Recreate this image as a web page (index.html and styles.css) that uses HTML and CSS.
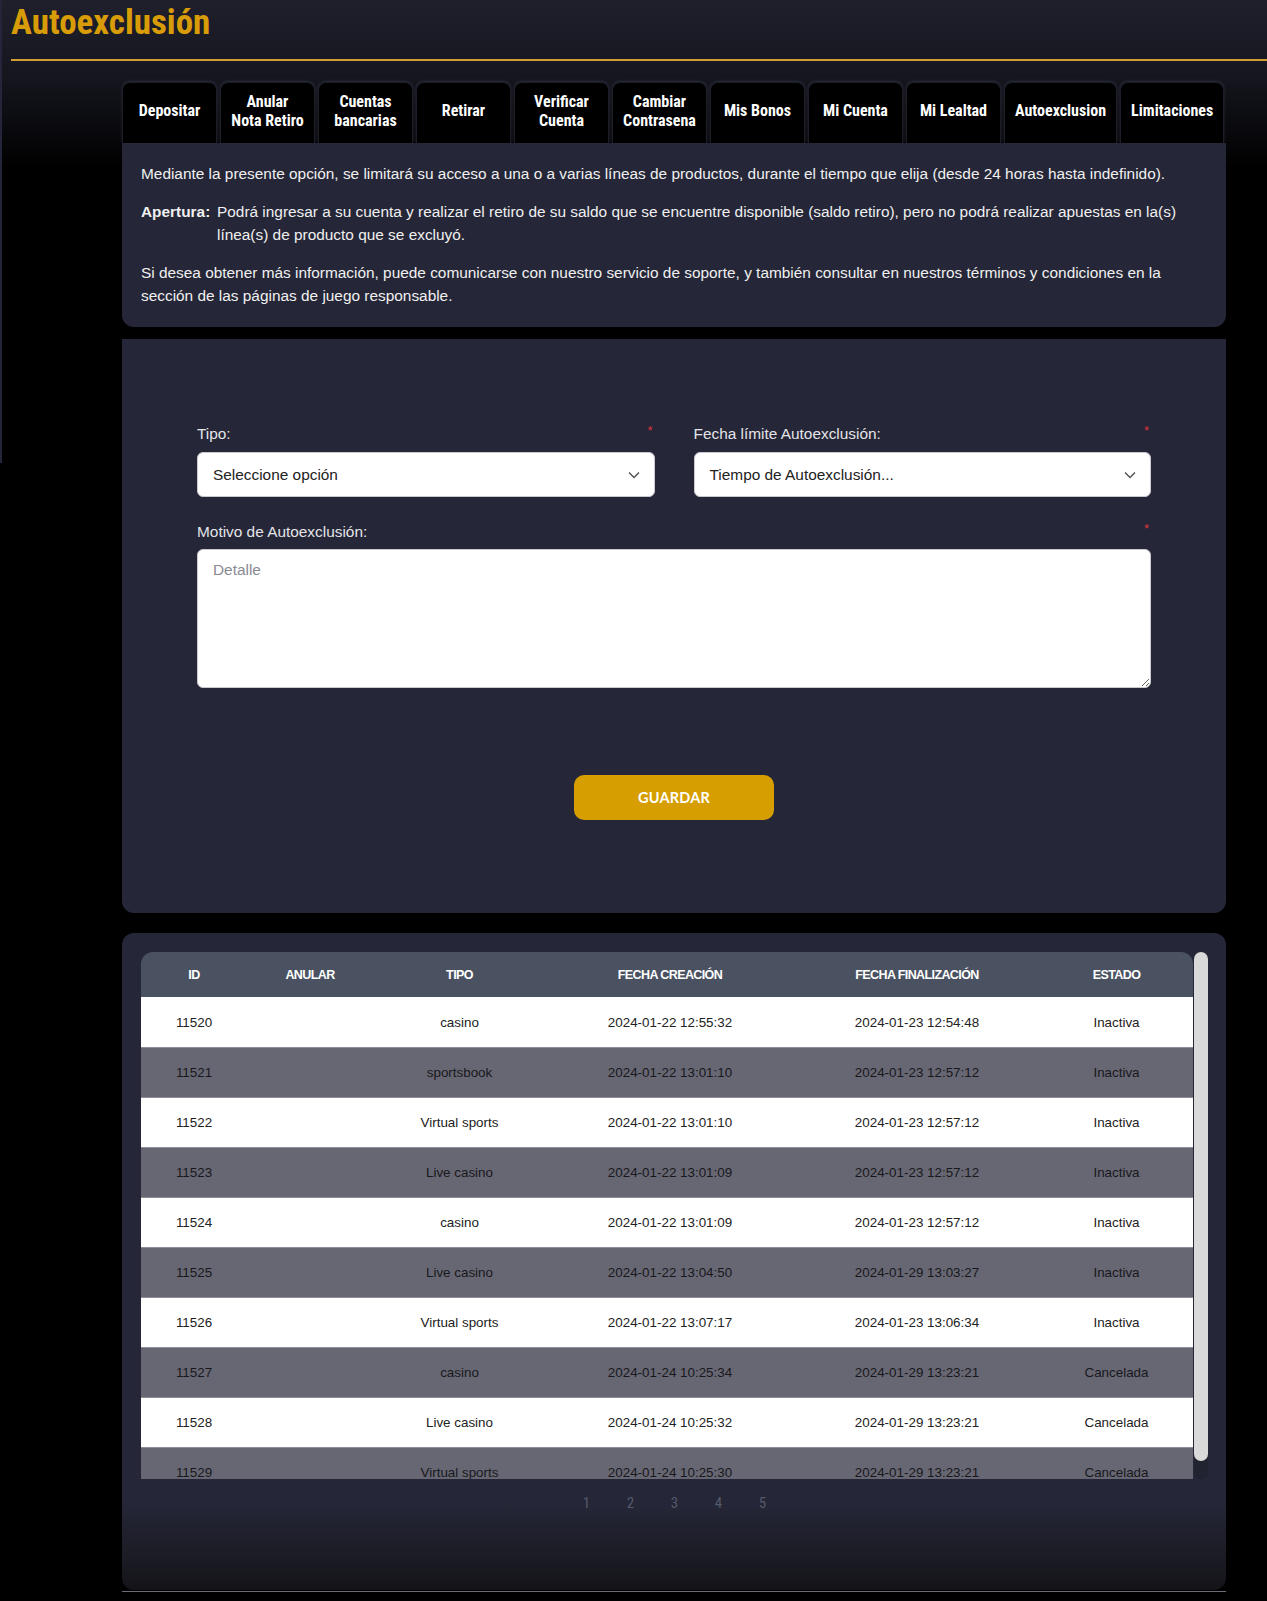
FILE: index.html
```html
<!DOCTYPE html>
<html lang="es">
<head>
<meta charset="utf-8">
<title>Autoexclusión</title>
<link rel="stylesheet" href="styles.css">
</head>
<body>
<div class="page">
  <header class="page-head">
    <h1 class="title">Autoexclusión</h1>
  </header>

  <main class="content">
    <nav class="tabs">
      <a class="tab">Depositar</a>
      <a class="tab">Anular<br>Nota Retiro</a>
      <a class="tab">Cuentas<br>bancarias</a>
      <a class="tab">Retirar</a>
      <a class="tab">Verificar<br>Cuenta</a>
      <a class="tab">Cambiar<br>Contrasena</a>
      <a class="tab">Mis Bonos</a>
      <a class="tab">Mi Cuenta</a>
      <a class="tab">Mi Lealtad</a>
      <a class="tab">Autoexclusion</a>
      <a class="tab">Limitaciones</a>
    </nav>

    <section class="panel info">
      <p>Mediante la presente opción, se limitará su acceso a una o a varias líneas de productos, durante el tiempo que elija (desde 24 horas hasta indefinido).</p>
      <p class="def"><b class="def-label">Apertura:</b><span>Podrá ingresar a su cuenta y realizar el retiro de su saldo que se encuentre disponible (saldo retiro), pero no podrá realizar apuestas en la(s) línea(s) de producto que se excluyó.</span></p>
      <p>Si desea obtener más información, puede comunicarse con nuestro servicio de soporte, y también consultar en nuestros términos y condiciones en la sección de las páginas de juego responsable.</p>
    </section>

    <section class="panel form-panel">
      <form class="form">
        <div class="form-row">
          <div class="field">
            <div class="label-row"><label>Tipo:</label><span class="req">*</span></div>
            <div class="select"><span>Seleccione opción</span>
              <svg class="chev" width="12" height="8" viewBox="0 0 12 8"><path d="M1 1.5 6 6.5 11 1.5" fill="none" stroke="#555" stroke-width="1.5"/></svg>
            </div>
          </div>
          <div class="field">
            <div class="label-row"><label>Fecha límite Autoexclusión:</label><span class="req">*</span></div>
            <div class="select"><span>Tiempo de Autoexclusión...</span>
              <svg class="chev" width="12" height="8" viewBox="0 0 12 8"><path d="M1 1.5 6 6.5 11 1.5" fill="none" stroke="#555" stroke-width="1.5"/></svg>
            </div>
          </div>
        </div>
        <div class="field full">
          <div class="label-row"><label>Motivo de Autoexclusión:</label><span class="req">*</span></div>
          <textarea class="textarea" placeholder="Detalle"></textarea>
        </div>
        <div class="actions">
          <button type="button" class="btn">GUARDAR</button>
        </div>
      </form>
    </section>

    <section class="panel table-panel">
      <div class="table-wrap">
        <div class="viewport">
          <table class="grid">
            <colgroup>
              <col class="c-id"><col class="c-anular"><col class="c-tipo"><col class="c-fc"><col class="c-ff"><col class="c-estado">
            </colgroup>
            <thead>
              <tr><th>ID</th><th>ANULAR</th><th>TIPO</th><th>FECHA CREACIÓN</th><th>FECHA FINALIZACIÓN</th><th>ESTADO</th></tr>
            </thead>
            <tbody>
              <tr><td>11520</td><td></td><td>casino</td><td>2024-01-22 12:55:32</td><td>2024-01-23 12:54:48</td><td>Inactiva</td></tr>
              <tr><td>11521</td><td></td><td>sportsbook</td><td>2024-01-22 13:01:10</td><td>2024-01-23 12:57:12</td><td>Inactiva</td></tr>
              <tr><td>11522</td><td></td><td>Virtual sports</td><td>2024-01-22 13:01:10</td><td>2024-01-23 12:57:12</td><td>Inactiva</td></tr>
              <tr><td>11523</td><td></td><td>Live casino</td><td>2024-01-22 13:01:09</td><td>2024-01-23 12:57:12</td><td>Inactiva</td></tr>
              <tr><td>11524</td><td></td><td>casino</td><td>2024-01-22 13:01:09</td><td>2024-01-23 12:57:12</td><td>Inactiva</td></tr>
              <tr><td>11525</td><td></td><td>Live casino</td><td>2024-01-22 13:04:50</td><td>2024-01-29 13:03:27</td><td>Inactiva</td></tr>
              <tr><td>11526</td><td></td><td>Virtual sports</td><td>2024-01-22 13:07:17</td><td>2024-01-23 13:06:34</td><td>Inactiva</td></tr>
              <tr><td>11527</td><td></td><td>casino</td><td>2024-01-24 10:25:34</td><td>2024-01-29 13:23:21</td><td>Cancelada</td></tr>
              <tr><td>11528</td><td></td><td>Live casino</td><td>2024-01-24 10:25:32</td><td>2024-01-29 13:23:21</td><td>Cancelada</td></tr>
              <tr><td>11529</td><td></td><td>Virtual sports</td><td>2024-01-24 10:25:30</td><td>2024-01-29 13:23:21</td><td>Cancelada</td></tr>
            </tbody>
          </table>
        </div>
        <div class="scrollbar"><div class="thumb"></div></div>
      </div>
      <div class="pager">
        <span>1</span><span>2</span><span>3</span><span>4</span><span>5</span>
      </div>
    </section>
    <div class="bottom-rule"></div>
  </main>
</div>
</body>
</html>
```
FILE: styles.css
```css
* { box-sizing: border-box; }

html, body {
  margin: 0;
  padding: 0;
}

body {
  background: #000 linear-gradient(180deg, #1f202c 0px, #14151d 80px, #000 170px) no-repeat;
  background-size: 100% 200px;
  font-family: "Liberation Sans", Arial, sans-serif;
  color: #eee;
  min-height: 1601px;
}

.page {
  position: relative;
  padding-bottom: 40px;
}

.page::before {
  content: "";
  position: absolute;
  left: 0;
  top: 0;
  width: 2px;
  height: 463px;
  background: #24253a;
}

/* header */
.page-head {
  margin-left: 11px;
  border-bottom: 2px solid #d29d33;
  height: 61px;
}

.title {
  margin: 0;
  font-family: "Roboto Condensed", "Liberation Sans", sans-serif;
  font-weight: 700;
  font-size: 35px;
  line-height: 45px;
  color: #d89c08;
}

/* content column */
.content {
  margin-left: 122px;
  width: 1104px;
  padding-top: 21px;
}

.tabs {
  display: flex;
  gap: 3px;
  height: 61px;
}

.tab {
  flex: 0 0 auto;
  min-width: 95px;
  padding: 0 10px 3px;
  display: flex;
  align-items: center;
  justify-content: center;
  text-align: center;
  background: #000;
  border: 1px solid #1c1d27;
  border-bottom: 0;
  border-radius: 8px 8px 0 0;
  box-shadow: 0 -1px 3px rgba(90, 92, 120, 0.35);
  color: #fff;
  font-family: "Roboto Condensed", "Liberation Sans", sans-serif;
  font-weight: 700;
  font-size: 16px;
  line-height: 18.5px;
}

.panel {
  background: #252637;
}

.info {
  border-radius: 0 0 12px 12px;
  padding: 19px 30px 20px 19px;
  font-size: 15.4px;
  line-height: 23px;
  color: #f0f0f0;
}

.info p {
  margin: 0 0 15px;
}

.info p:last-child {
  margin-bottom: 0;
}

.def {
  display: flex;
}

.def-label {
  flex: 0 0 76px;
}

/* form */
.form-panel {
  margin-top: 12px;
  border-radius: 0 0 12px 12px;
  padding: 85px 75px 0;
  height: 574px;
}

.form {
  width: 954px;
}

.form-row {
  display: flex;
  gap: 39px;
}

.field {
  flex: 1 1 0;
}

.field.full {
  margin-top: 25px;
}

.label-row {
  display: flex;
  justify-content: space-between;
  align-items: flex-start;
  height: 20px;
  line-height: 20px;
  font-size: 15.4px;
  color: #e4e4e8;
}

.req {
  color: #d9333f;
  font-size: 13px;
  line-height: 14px;
  margin-right: 2px;
}

.field .label-row {
  margin-bottom: 8px;
}

.field.full .label-row {
  margin-bottom: 7px;
}

.select {
  height: 45px;
  background: #fff;
  border: 1px solid #c9c9cf;
  border-radius: 6px;
  padding: 0 14px 0 15px;
  display: flex;
  align-items: center;
  justify-content: space-between;
  font-size: 15.4px;
  color: #222;
}

.chev {
  display: block;
}

.textarea {
  display: block;
  width: 100%;
  height: 139px;
  margin: 0;
  background: #fff;
  border: 1px solid #c9c9cf;
  border-radius: 6px;
  padding: 10px 15px;
  font-family: "Liberation Sans", Arial, sans-serif;
  font-size: 15.4px;
  line-height: 20px;
  color: #222;
  resize: vertical;
  outline: none;
}

.textarea::placeholder {
  color: #8a8a92;
}

.actions {
  display: flex;
  justify-content: center;
  margin-top: 87px;
}

.btn {
  width: 200px;
  height: 45px;
  border: 0;
  border-radius: 10px;
  background: #d69e00;
  color: #fff;
  font-family: Lato, "Open Sans", sans-serif;
  font-weight: 700;
  font-size: 14.5px;
  letter-spacing: 0.2px;
  cursor: pointer;
}

/* table */
.table-panel {
  margin-top: 20px;
  border-radius: 12px;
  height: 657px;
  padding: 19px 18px 0 19px;
  background: linear-gradient(180deg, #252637 0%, #252637 87%, #18191f 97%, #131318 100%);
}

.table-wrap {
  display: flex;
  gap: 1px;
}

.viewport {
  width: 1052px;
  height: 527px;
  overflow: hidden;
  border-radius: 12px 12px 0 0;
}

.grid {
  width: 1052px;
  table-layout: fixed;
  border-collapse: collapse;
}

.c-id { width: 106px; }
.c-anular { width: 126px; }
.c-tipo { width: 173px; }
.c-fc { width: 248px; }
.c-ff { width: 246px; }
.c-estado { width: 153px; }

.grid th {
  height: 45px;
  background: #4a5262;
  color: #fff;
  font-family: "Liberation Sans", Arial, sans-serif;
  font-weight: 700;
  font-size: 12.5px;
  letter-spacing: -0.6px;
  text-align: center;
  padding: 0;
}

.grid td {
  height: 50px;
  padding: 1px 0 0;
  text-align: center;
  font-size: 13.4px;
  color: #222;
  border-top: 1px solid #8e8e98;
}

.grid tbody tr:first-child td {
  border-top: 0;
}

.grid tbody tr:nth-child(odd) {
  background: #fff;
}

.grid tbody tr:nth-child(even) {
  background: #676773;
}

.grid tbody tr:nth-child(even) td {
  color: #18181c;
}

.scrollbar {
  width: 14px;
  height: 527px;
  border-radius: 7px;
  background: #222330;
}

.thumb {
  height: 509px;
  border-radius: 7px;
  background: #d9d9d9;
}

.pager {
  display: flex;
  justify-content: center;
  margin-top: 14px;
  font-family: "Roboto Condensed", "Liberation Sans", sans-serif;
  font-size: 15px;
  line-height: 20px;
  color: #555a6b;
}

.pager span {
  width: 44px;
  text-align: center;
}

.bottom-rule {
  height: 1px;
  margin-top: 1px;
  background: #6b6d78;
}
```
